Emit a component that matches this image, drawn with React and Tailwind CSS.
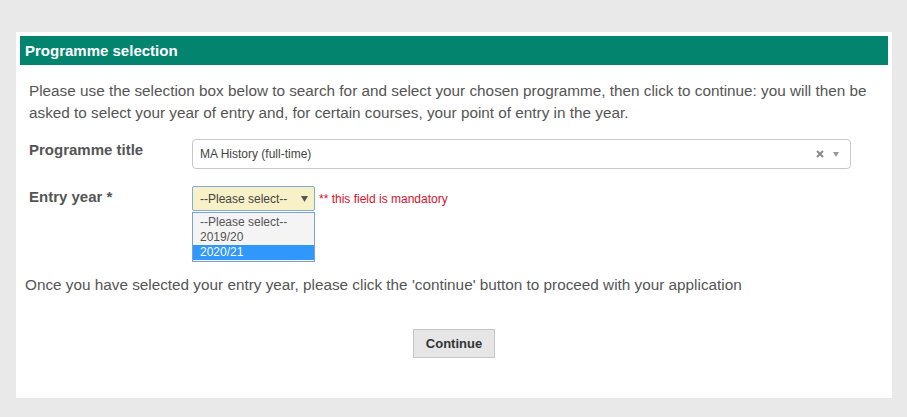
const font = { fontFamily: '"Liberation Sans", Arial, sans-serif' };

const years = ['--Please select--', '2019/20', '2020/21'];

const ProgrammeSelection = () => {
  return (
    <div className="min-h-screen bg-[#e9e9e9] pt-[32px] pb-[19px] pl-[16px]" style={font}>
      <div className="w-[876px] h-[366px] bg-white p-[4px]">
        {/* Header bar */}
        <div className="h-[29px] bg-[#02846f] flex items-center px-[5px]">
          <h1 className="text-[15px] font-bold text-white leading-none">Programme selection</h1>
        </div>

        <p className="mt-[15px] pl-[9px] w-[862px] text-[15.3px] leading-[22px] text-[#555]">
          Please use the selection box below to search for and select your chosen programme, then click to continue: you will then be asked to select your year of entry and, for certain courses, your point of entry in the year.
        </p>

        {/* Programme title */}
        <div className="mt-[15px] pl-[9px] flex items-start">
          <label className="w-[163px] text-[15px] font-bold leading-[22px] text-[#555]">Programme title</label>
          <div className="w-[659px] h-[30px] border border-[#c8c8c8] rounded-[4px] flex items-center pl-[7px] pr-[11px]">
            <span className="flex-1 text-[12px] text-[#444]">MA History (full-time)</span>
            <svg width="8" height="8" viewBox="0 0 8 8" className="mr-[9px]">
              <path d="M1 1 L7 7 M7 1 L1 7" stroke="#8a8a8a" strokeWidth="2" />
            </svg>
            <svg width="6" height="5" viewBox="0 0 6 5"><path d="M0 0 L6 0 L3 5 Z" fill="#999" /></svg>
          </div>
        </div>

        {/* Entry year */}
        <div className="mt-[17px] pl-[9px] flex items-start">
          <label className="w-[163px] text-[15px] font-bold leading-[22px] text-[#555]">Entry year *</label>
          <div className="relative">
            <div className="w-[123px] h-[25px] bg-[#f8f0c6] border border-[#7eaedb] rounded-[2px] flex items-center pl-[7px] pr-[6px]">
              <span className="flex-1 text-[12px] text-[#444]">--Please select--</span>
              <svg width="7" height="6" viewBox="0 0 7 6"><path d="M0 0 L7 0 L3.5 6 Z" fill="#555" /></svg>
            </div>
            <ul className="absolute left-0 top-[26px] w-[123px] bg-[#f4f4f4] border border-[#7f9fd3] pt-[2px] pb-[1px]">
              {years.map((y, i) => (
                <li
                  key={y}
                  className={`h-[15px] leading-[15px] pl-[7px] text-[12px] ${i === 2 ? 'bg-[#3097fb] text-white' : 'text-[#555]'}`}
                >
                  {y}
                </li>
              ))}
            </ul>
          </div>
          <span className="ml-[4px] mt-[6px] text-[12px] leading-[14px] text-[#d6112e]">** this field is mandatory</span>
        </div>

        <p className="mt-[63px] pl-[5px] text-[15.3px] leading-[22px] text-[#555]">
          Once you have selected your entry year, please click the 'continue' button to proceed with your application
        </p>

        <div className="mt-[33px] flex justify-center">
          <button className="w-[82px] h-[29px] bg-[#e6e6e6] border border-[#c6c6c6] text-[13px] font-bold text-[#333]">
            Continue
          </button>
        </div>
      </div>
    </div>
  );
};

export default function App() {
  return <ProgrammeSelection />;
}
